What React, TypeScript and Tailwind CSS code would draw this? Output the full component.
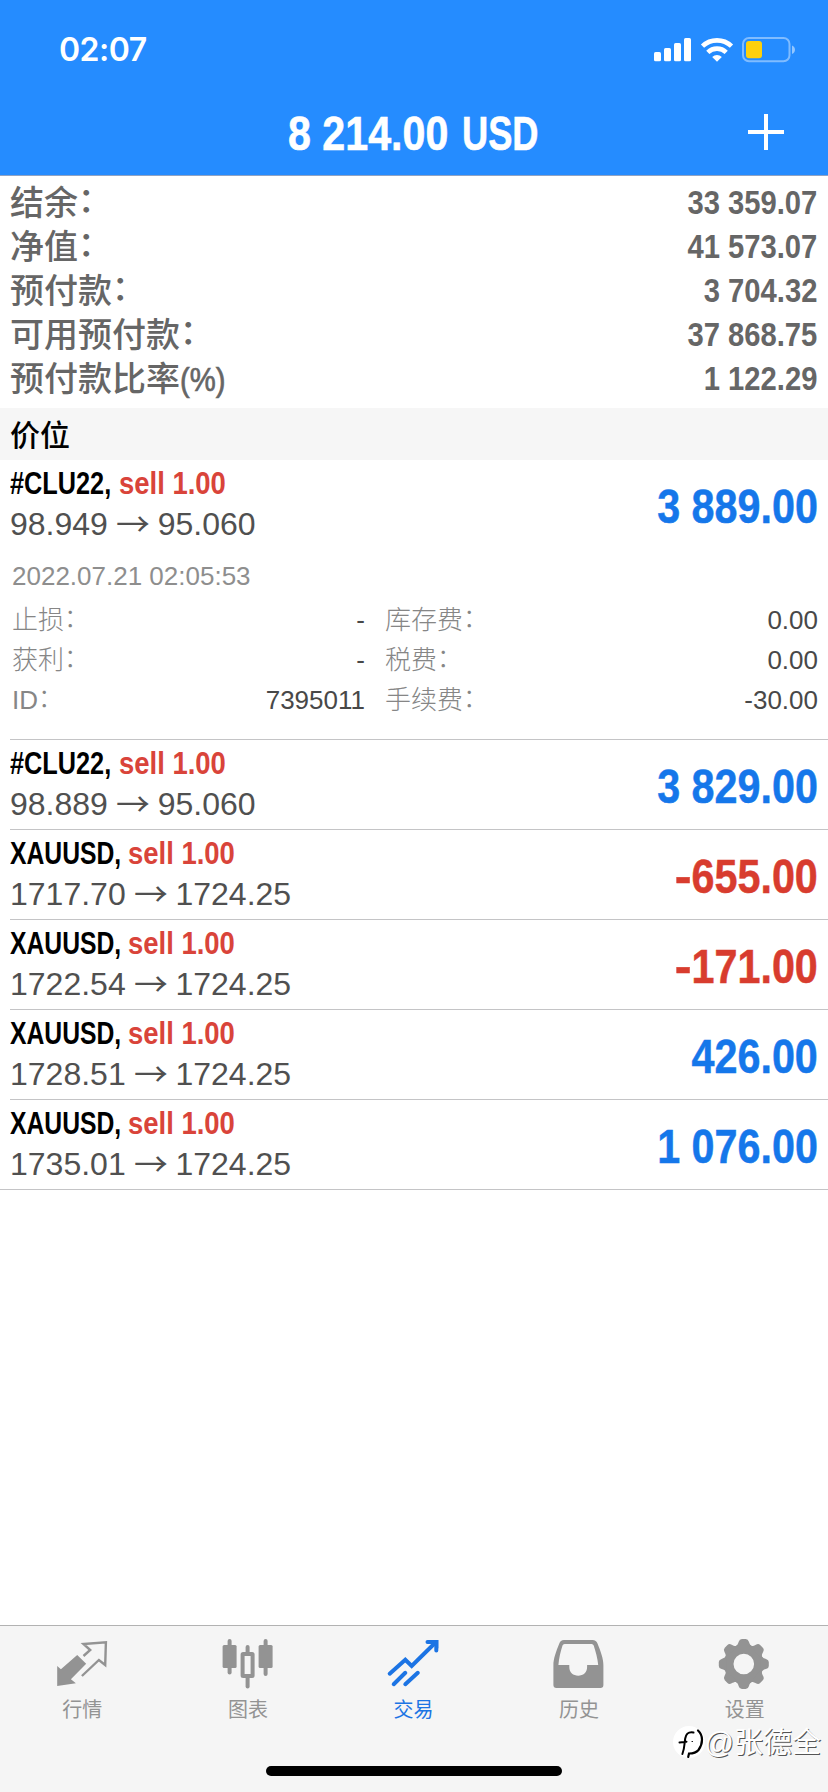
import type { ReactNode } from 'react';

interface Position {
  symbol: string;
  symbolStyle: string;
  open: string;
  current: string;
  profit: string;
}

const summary = [
  { label: '结余', value: '33 359.07' },
  { label: '净值', value: '41 573.07' },
  { label: '预付款', value: '3 704.32' },
  { label: '可用预付款', value: '37 868.75' },
  { label: '预付款比率', unit: '(%)', value: '1 122.29' },
];

const CLU = 'w-[109px] [&>span]:scale-x-[0.79]';
const XAU = 'w-[118px] [&>span]:scale-x-[0.772]';

const positions: Position[] = [
  { symbol: '#CLU22,', symbolStyle: CLU, open: '98.949', current: '95.060', profit: '3 889.00' },
  { symbol: '#CLU22,', symbolStyle: CLU, open: '98.889', current: '95.060', profit: '3 829.00' },
  { symbol: 'XAUUSD,', symbolStyle: XAU, open: '1717.70', current: '1724.25', profit: '-655.00' },
  { symbol: 'XAUUSD,', symbolStyle: XAU, open: '1722.54', current: '1724.25', profit: '-171.00' },
  { symbol: 'XAUUSD,', symbolStyle: XAU, open: '1728.51', current: '1724.25', profit: '426.00' },
  { symbol: 'XAUUSD,', symbolStyle: XAU, open: '1735.01', current: '1724.25', profit: '1 076.00' },
];

const details = [
  { left: '止损', leftValue: '-', right: '库存费', rightValue: '0.00' },
  { left: '获利', leftValue: '-', right: '税费', rightValue: '0.00' },
  { left: 'ID', leftValue: '7395011', right: '手续费', rightValue: '-30.00' },
];

// full-width colon, raised to the middle of the line
function Colon() {
  return <span className="inline-block translate-x-[-0.01em] translate-y-[-0.09em]">：</span>;
}

function StatusIcons() {
  return (
    <svg width="144" height="28" viewBox="652 36 144 28" fill="white">
      <rect x="653" y="52" width="7" height="9.3" rx="1.6" />
      <rect x="663" y="48" width="7" height="13.3" rx="1.6" />
      <rect x="673" y="43" width="7" height="18.3" rx="1.6" />
      <rect x="683" y="38" width="7" height="23.3" rx="1.6" />
      <g fill="none" stroke="white" strokeWidth="4.6">
        <path d="M701.5 46.2a21 21 0 0 1 29 0" />
        <path d="M706.8 52.3a13.3 13.3 0 0 1 18.4 0" />
      </g>
      <path d="M716 61.8l-4.8-4.9a7 7 0 0 1 9.6 0z" />
      <rect x="742" y="38" width="46.5" height="23.3" rx="6" fill="none" stroke="#fff" strokeOpacity="0.42" strokeWidth="2" />
      <rect x="745" y="41" width="16" height="17.3" rx="3" fill="#fdd00c" />
      <path d="M791 45.5c4 1.5 4 7 0 8.5z" fillOpacity="0.5" />
    </svg>
  );
}

function Header() {
  return (
    <header className="h-[176px] shrink-0 border-b border-[#8fa3c4] bg-[#258cff] text-white">
      <div className="flex h-[100px] items-center justify-between pl-[59px] pr-[31px]">
        <span className="font-['Inter'] text-[32px] font-semibold leading-none tracking-[-0.5px]">02:07</span>
        <StatusIcons />
      </div>
      <div className="grid h-[66px] grid-cols-[288px_1fr_80px] items-center text-[48px] font-bold leading-none">
        <div className="col-start-2 flex whitespace-nowrap pt-[2px] [-webkit-text-stroke:0.6px_white]">
          <span className="w-[174px]"><span className="inline-block origin-left scale-x-[0.858]">8 214.00</span></span>
          <span className="inline-block origin-left scale-x-[0.755]">USD</span>
        </div>
        <svg className="mb-[3px]" width="36" height="36" viewBox="0 0 36 36" stroke="white" strokeWidth="4">
          <path d="M0 18h36M18 0v36" />
        </svg>
      </div>
    </header>
  );
}

function PositionHead({ position }: { position: Position }) {
  const loss = position.profit.startsWith('-');
  return (
    <div className="flex h-[89px] items-start justify-between pr-[10px]">
      <div className="pt-[2px]">
        <div className="flex h-[41px] items-center whitespace-nowrap text-[32px] font-bold leading-none">
          <span className={position.symbolStyle}><span className="inline-block origin-left text-black">{position.symbol}</span></span>
          <span className="inline-block origin-left scale-x-[0.858] text-[#d9443a]">sell 1.00</span>
        </div>
        <div className="h-[41px] whitespace-pre text-[32px] leading-[43px] text-[#505050]">
          {`${position.open} `}
          <span className="inline-block translate-y-px scale-x-[1.06] font-['Noto_Sans_CJK_SC'] leading-none">→</span>
          {` ${position.current}`}
        </div>
      </div>
      <span className={`origin-right scale-x-[0.86] whitespace-nowrap pt-[23px] text-[48px] font-bold leading-none [-webkit-text-stroke:0.5px_currentColor] ${loss ? 'text-[#d83c2e]' : 'text-[#1577ea]'}`}>
        {loss && <span className="inline-block origin-right scale-x-[1.22]">-</span>}
        {loss ? position.profit.slice(1) : position.profit}
      </span>
    </div>
  );
}

function PositionDetails() {
  return (
    <div className="h-[190px] pr-[10px] text-[26px] font-light">
      <div className="flex h-[51px] items-center pl-[2px] pt-[2px] leading-none text-[#8e8e8e]">2022.07.21 02:05:53</div>
      {details.map((row) => (
        <div key={row.left} className="grid h-10 grid-cols-[355px_1fr] gap-x-[20px] leading-10 text-[#868686]">
          <div className="flex justify-between pl-[2px]">
            <span>{row.left}<Colon /></span>
            <span className="text-[#484848]">{row.leftValue}</span>
          </div>
          <div className="flex justify-between">
            <span>{row.right}<Colon /></span>
            <span className="text-[#484848]">{row.rightValue}</span>
          </div>
        </div>
      ))}
    </div>
  );
}

const GEAR_ANGLES = [0, 45, 90, 135, 180, 225, 270, 315];

function TabIcon({ children }: { children: ReactNode }) {
  return <svg width="60" height="60" viewBox="0 0 60 60" fill="currentColor">{children}</svg>;
}

function QuotesIcon() {
  return (
    <TabIcon>
      <path d="M4.2 31l3.7 3.3L24.2 20l9 8.7-15.3 15.6 5 4L4.2 51z" />
      <path d="M30.5 21l6.7-6-6.7-6 22.4-1.7-.7 22.7-6.3-5-17 16" fill="none" stroke="currentColor" strokeWidth="2.4" />
    </TabIcon>
  );
}

function ChartIcon() {
  return (
    <TabIcon>
      <rect x="9.6" y="4" width="4" height="35.5" rx="2" />
      <rect x="4.6" y="10" width="14" height="23" rx="1.5" />
      <rect x="27.6" y="10" width="4" height="10" rx="2" />
      <rect x="27.6" y="41" width="4" height="12.5" rx="2" />
      <rect x="24.6" y="19" width="10" height="22" rx="0.5" fill="none" stroke="currentColor" strokeWidth="4" />
      <rect x="45.6" y="4" width="4" height="37" rx="2" />
      <rect x="40.6" y="10" width="14" height="23" rx="1.5" />
    </TabIcon>
  );
}

function TradeIcon() {
  return (
    <TabIcon>
      <g fill="none" stroke="currentColor" strokeWidth="4" strokeLinecap="round" strokeLinejoin="miter">
        <path d="M5.7 38.7l15.6-14 6.4 6.3L50.5 8.5" />
        <path d="M43.5 7h8.8v8.5" />
        <path d="M9.7 49.2l11.6-11.4M21.3 49.2l12.5-11.4" />
      </g>
      <path d="M46 5h8.3v8.5z" />
    </TabIcon>
  );
}

function HistoryIcon() {
  return (
    <TabIcon>
      <path
        fillRule="evenodd"
        d="M14 5h28.5c2.5 0 4.2 1.2 5 3.5 3.2 8 5.9 15 5.9 22V50q0 3-3 3H6.4q-3 0-3-3V30.5c0-7 2.7-14 5.9-22 .8-2.3 2.2-3.5 4.7-3.5zm.5 4q-1.5 0-2 1.5C10.5 17 9 23 8.4 30h10.9v2c0 5.5 4 8.7 8.9 8.7s8.9-3.2 8.9-8.7v-2h11.1c-.6-7-2.5-13-4.5-19.5q-.5-1.5-2-1.5z"
      />
    </TabIcon>
  );
}

function SettingsIcon() {
  return (
    <TabIcon>
      <circle cx="28.8" cy="29" r="15" fill="none" stroke="currentColor" strokeWidth="9.4" />
      {GEAR_ANGLES.map((angle) => (
        <path key={angle} d="M19.3 12c3-1 3.7-3 4.4-5.2q.8-2.8 3.2-2.8h3.8q2.4 0 3.2 2.8c.7 2.2 1.4 4.2 4.4 5.2z" transform={`rotate(${angle} 28.8 29)`} />
      ))}
    </TabIcon>
  );
}

const tabs = [
  { label: '行情', icon: QuotesIcon, active: false },
  { label: '图表', icon: ChartIcon, active: false },
  { label: '交易', icon: TradeIcon, active: true },
  { label: '历史', icon: HistoryIcon, active: false },
  { label: '设置', icon: SettingsIcon, active: false },
];

function Watermark() {
  return (
    <div className="absolute right-[7px] top-[99px] flex items-center">
      <svg className="-mr-[3px]" width="36" height="36" viewBox="0 0 36 36" fill="none" strokeLinecap="round">
        <circle cx="17" cy="17" r="16" fill="white" />
        <path d="M7.5 17.5l7-.8M21.5 7.5c-5-.8-7.3.5-8.3 6-.8 5-.6 10-2.8 15.5" stroke="black" strokeWidth="2" />
        <path d="M26 5.5c5.5 5 5 13 .5 19.5-2.5 3-7 3.5-9.5 3.5l-.8 3.5" stroke="black" strokeWidth="2.2" />
        <path d="M20 16.5h.5" stroke="black" />
      </svg>
      <span className="text-[29px] leading-none text-white [text-shadow:1px_1px_0_#555]">@张德全</span>
    </div>
  );
}

export default function App() {
  return (
    <div className="flex h-[1792px] w-[828px] flex-col overflow-hidden bg-white font-['Liberation_Sans','Noto_Sans_CJK_SC',sans-serif]">
      <Header />

      <section className="h-[232px] shrink-0 pl-[10px] pr-[11px] pt-[4px] text-[34px] text-[#666]">
        {summary.map((row) => (
          <div key={row.label} className="flex h-11 items-center justify-between">
            <span className="flex pt-[2px] font-medium leading-none">
              {row.label}
              {row.unit ? <span className="inline-block origin-left scale-x-[0.86] [-webkit-text-stroke:0.7px_#666]">{row.unit}</span> : <Colon />}
            </span>
            <span className="origin-right scale-x-[0.858] font-bold leading-none">{row.value}</span>
          </div>
        ))}
      </section>

      <h2 className="flex h-[52px] shrink-0 items-center bg-[#f6f6f6] pb-[3px] pl-[10px] font-['Noto_Sans_CJK_SC'] text-[30px] font-medium leading-none text-black">价位</h2>

      <main className="flex-1">
        {positions.map((position, i) => (
          <div key={position.open} className={i === positions.length - 1 ? 'border-b border-[#c4c4c6] pl-[10px]' : 'pl-[10px]'}>
            <div className={i === positions.length - 1 ? '' : 'border-b border-[#c4c4c6]'}>
              <PositionHead position={position} />
              {i === 0 && <PositionDetails />}
            </div>
          </div>
        ))}
      </main>

      <nav className="relative h-[167px] shrink-0 border-t border-[#b2b2b2] bg-[#f5f5f5]">
        <div className="grid grid-cols-5 pt-[9px]">
          {tabs.map((tab) => (
            <div key={tab.label} className={`flex flex-col items-center ${tab.active ? 'text-[#1c74e4]' : 'text-[#939393]'}`}>
              <tab.icon />
              <span className="pr-[1px] pt-[2px] font-['Noto_Sans_CJK_SC'] text-[20px] leading-6">{tab.label}</span>
            </div>
          ))}
        </div>
        <div className="absolute left-[266px] top-[140px] h-[10px] w-[296px] rounded-full bg-black" />
        <Watermark />
      </nav>
    </div>
  );
}
